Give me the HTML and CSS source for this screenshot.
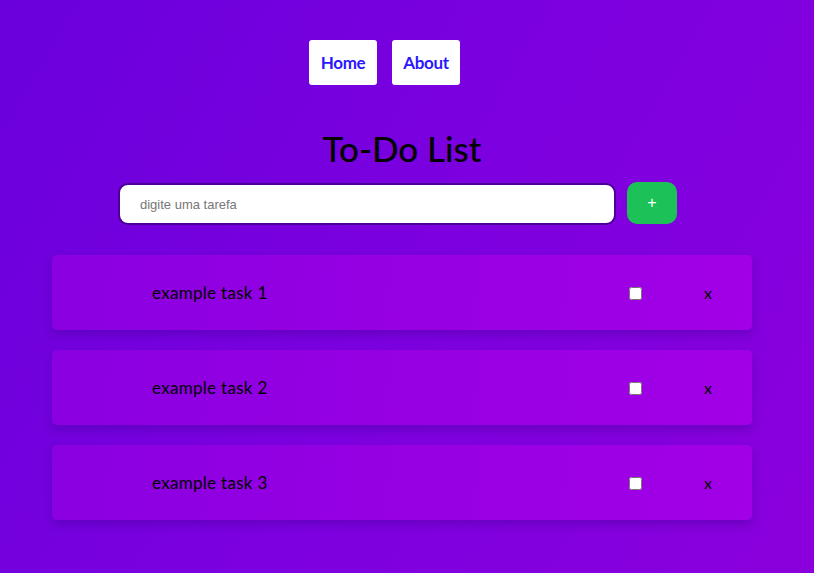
FILE: index.html
```html
<!DOCTYPE html>
<html lang="pt">
<head>
<meta charset="utf-8">
<title>To-Do List</title>
<link rel="stylesheet" href="styles.css">
</head>
<body>
<nav class="nav">
  <a class="nav-link" href="#">Home</a>
  <a class="nav-link" href="#">About</a>
</nav>
<main class="container">
  <h1 class="title">To-Do List</h1>
  <form class="add-form">
    <input class="task-input" type="text" placeholder="digite uma tarefa">
    <button class="add-btn" type="button">+</button>
  </form>
  <ul class="tasks">
    <li class="task"><span class="task-text">example task 1</span><input class="task-check" type="checkbox"><span class="task-del">x</span></li>
    <li class="task"><span class="task-text">example task 2</span><input class="task-check" type="checkbox"><span class="task-del">x</span></li>
    <li class="task"><span class="task-text">example task 3</span><input class="task-check" type="checkbox"><span class="task-del">x</span></li>
  </ul>
</main>
</body>
</html>
```
FILE: styles.css
```css
* { box-sizing: border-box; }
html, body { margin: 0; height: 100%; }
body {
  background: linear-gradient(120deg, #6a00dc 0%, #7c00e0 50%, #8a00dc 100%);
  font-family: "Lato", "Open Sans", sans-serif;
  overflow: hidden;
}
.nav {
  display: flex;
  justify-content: center;
  gap: 15px;
  padding: 40px 45px 0 0;
}
.nav-link {
  display: flex;
  align-items: center;
  justify-content: center;
  width: 68px;
  height: 45px;
  background: #fff;
  border-radius: 3px;
  color: #2b17ff;
  text-decoration: none;
  font-size: 17px;
  font-weight: 700;
  letter-spacing: -0.3px;
}
.container {
  width: 700px;
  margin-left: 52px;
}
.title {
  margin: 38px 0 0;
  text-align: center;
  font-size: 35px;
  font-weight: 500;
  line-height: 50px;
  color: #000;
}
.add-form {
  display: flex;
  gap: 11px;
  margin: 10px 0 0 66px;
}
.task-input {
  width: 498px;
  height: 42px;
  border: 2px solid #4a0096;
  border-radius: 10px;
  padding: 0 20px;
  font-family: "Liberation Sans", Arial, sans-serif;
  font-size: 13px;
  background: #fff;
  outline: none;
}
.task-input::placeholder { color: #777; }
.add-btn {
  width: 50px;
  height: 42px;
  margin-top: -1px;
  border: none;
  border-radius: 10px;
  background: #1cc157;
  color: #fff;
  font-size: 16px;
  font-family: "Liberation Sans", Arial, sans-serif;
}
.tasks {
  list-style: none;
  margin: 30px 0 0;
  padding: 0;
  display: flex;
  flex-direction: column;
  gap: 20px;
}
.task {
  display: flex;
  align-items: center;
  height: 75px;
  border-radius: 5px;
  background: linear-gradient(100deg, #8a00e0 0%, #a200e6 100%);
  box-shadow: 0 5px 10px rgba(60, 0, 140, 0.35);
  padding-left: 100px;
  font-size: 17px;
  letter-spacing: 0.3px;
  color: #000;
}
.task-text { width: 477px; }
.task-check {
  width: 13px;
  height: 13px;
  margin: 2px 0 0;
}
.task-del { margin-left: 62px; font-size: 16px; }
```
